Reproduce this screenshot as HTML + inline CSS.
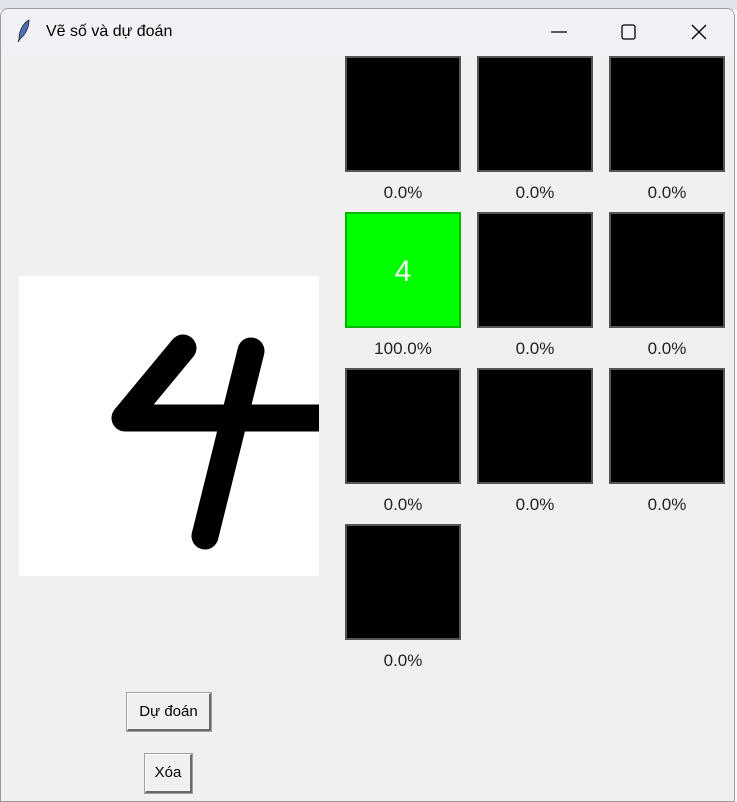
<!DOCTYPE html>
<html><head><meta charset="utf-8"><style>
body{margin:0;width:737px;height:801px;background:#fff;position:relative;overflow:hidden;font-family:"Liberation Sans",sans-serif}
.tab{position:absolute;left:0;top:0;width:737px;height:10px;background:#dfe3ea}
.win{position:absolute;left:0;top:8px;width:733px;height:792px;background:#f0f0f0;border:1px solid #9a9a9a;border-radius:8px 8px 0 0;overflow:hidden}
.title{height:45px;background:#f1f1f6;position:relative;font-size:16px;color:#000}
.title span.t{position:absolute;left:45px;top:14px}
.box{position:absolute;width:112px;height:112px;background:#000;border:2px solid #555}
.lbl{position:absolute;width:116px;text-align:center;font-size:17px;color:#222}
.btn{position:absolute;background:#f0f0f0;border:1px solid #fff;border-right:2px solid #6a6a6a;border-bottom:2px solid #6a6a6a;outline:1px solid #a0a0a0;font-size:15px;text-align:center;color:#000}
</style></head><body>
<div class="tab"></div>
<div class="win">
<div class="title">
<svg style="position:absolute;left:14px;top:10px" width="18" height="24"><path d="M14 1 C8 4 4 12 4 20 L3 23 L5 20 C10 16 14 9 14 1Z" fill="#4a6fb5" stroke="#223" stroke-width=".8"/></svg>
<span class="t">Vẽ số và dự đoán</span>
<svg style="position:absolute;left:548px;top:12px" width="170" height="22"><path d="M2 11H18" stroke="#000" stroke-width="1.2"/><rect x="73" y="4" width="13" height="14" rx="2" fill="none" stroke="#000" stroke-width="1.3"/><path d="M143 4L157 18M157 4L143 18" stroke="#000" stroke-width="1.3"/></svg>
</div>
</div>
<svg style="position:absolute;left:19px;top:276px" width="300" height="300"><rect width="300" height="300" fill="#fff"/><g stroke="#000" stroke-width="27" stroke-linecap="round" fill="none" stroke-linejoin="round"><path d="M164 72L106 142L320 142"/><path d="M232 75L186 260"/></g></svg>
<div class="box" style="left:345px;top:56px"></div><div class="box" style="left:477px;top:56px"></div><div class="box" style="left:609px;top:56px"></div>
<div class="box" style="left:345px;top:212px;background:#00ff00;border-color:#00b800;color:#fff;font-size:30px;text-align:center;line-height:116px">4</div><div class="box" style="left:477px;top:212px"></div><div class="box" style="left:609px;top:212px"></div>
<div class="box" style="left:345px;top:368px"></div><div class="box" style="left:477px;top:368px"></div><div class="box" style="left:609px;top:368px"></div>
<div class="box" style="left:345px;top:524px"></div>
<div class="lbl" style="left:345px;top:183px">0.0%</div><div class="lbl" style="left:477px;top:183px">0.0%</div><div class="lbl" style="left:609px;top:183px">0.0%</div>
<div class="lbl" style="left:345px;top:339px">100.0%</div><div class="lbl" style="left:477px;top:339px">0.0%</div><div class="lbl" style="left:609px;top:339px">0.0%</div>
<div class="lbl" style="left:345px;top:495px">0.0%</div><div class="lbl" style="left:477px;top:495px">0.0%</div><div class="lbl" style="left:609px;top:495px">0.0%</div>
<div class="lbl" style="left:345px;top:651px">0.0%</div>
<div class="btn" style="left:127px;top:693px;width:81px;height:35px;line-height:35px">Dự đoán</div>
<div class="btn" style="left:145px;top:754px;width:44px;height:36px;line-height:36px">Xóa</div>
</body></html>
